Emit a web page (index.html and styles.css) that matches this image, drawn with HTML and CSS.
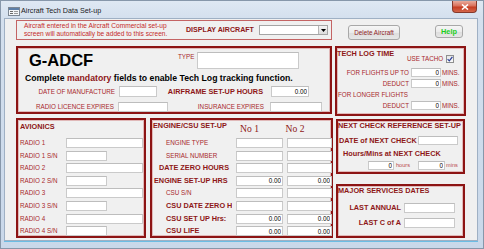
FILE: index.html
```html
<!DOCTYPE html>
<html lang="en">
<head>
    <meta charset="UTF-8">
    <title>Aircraft Tech Data Set-up</title>
    <link rel="stylesheet" href="styles.css">
</head>
<body>
<div class="window">
    <div class="titlebar">
        <svg class="app-icon" width="12" height="9" viewBox="0 0 12 9">
            <rect x="0.5" y="0.5" width="11" height="8" fill="#f4f6f8" stroke="#7d8793"/>
            <rect x="1" y="1" width="10" height="2" fill="#5d7fa8"/>
            <rect x="2" y="4" width="3" height="1" fill="#6a6a6a"/>
            <rect x="6" y="4" width="4" height="1" fill="#9a9a9a"/>
            <rect x="2" y="6" width="3" height="1" fill="#6a6a6a"/>
            <rect x="6" y="6" width="4" height="1" fill="#9a9a9a"/>
        </svg>
        <span class="title">Aircraft Tech Data Set-up</span>
        <div class="close-btn">
            <svg width="8" height="6" viewBox="0 0 8 6"><path d="M1 0.5 L7 5.5 M7 0.5 L1 5.5" stroke="#fff" stroke-width="1.6"/></svg>
        </div>
    </div>

    <div class="client">
        <div class="top-row">
            <div class="note">
                <div class="note-text">Aircraft entered in the Aircraft Commercial set-up<br>screen will automatically be added to this screen.</div>
                <div class="display-label">DISPLAY AIRCRAFT</div>
                <div class="combo">
                    <span class="combo-btn"><svg width="5" height="3" viewBox="0 0 5 3"><path d="M0 0 H5 L2.5 3 Z" fill="#000"/></svg></span>
                </div>
            </div>
            <button class="btn btn-delete">Delete Aircraft</button>
            <button class="btn btn-help">Help</button>
        </div>

        <div class="main">
            <div class="col-left">
                <div class="panel ident">
                    <div class="ident-top">
                        <div class="reg">G-ADCF</div>
                        <label class="lbl type-lbl">TYPE</label>
                        <input class="fld type-fld" type="text">
                    </div>
                    <div class="mandatory">Complete <span class="dark">mandatory</span> fields to enable Tech Log tracking function.</div>
                    <div class="ident-row row-c">
                        <label class="lbl l-dom">DATE OF MANUFACTURE</label>
                        <input class="fld f-dom" type="text">
                        <label class="blbl l-afh">AIRFRAME SET-UP HOURS</label>
                        <input class="fld f-afh" type="text" value="0.00">
                    </div>
                    <div class="ident-row row-d">
                        <label class="lbl l-rle">RADIO LICENCE EXPIRES</label>
                        <input class="fld f-rle" type="text">
                        <label class="lbl l-ins">INSURANCE EXPIRES</label>
                        <input class="fld f-ins" type="text">
                    </div>
                </div>

                <div class="lower">
                    <div class="panel avionics">
                        <div class="blbl panel-title">AVIONICS</div>
                        <div class="av-grid">
                            <label class="lbl">RADIO 1</label><input class="fld long" type="text">
                            <label class="lbl">RADIO 1 S/N</label><input class="fld short" type="text">
                            <label class="lbl">RADIO 2</label><input class="fld long" type="text">
                            <label class="lbl">RADIO 2 S/N</label><input class="fld short" type="text">
                            <label class="lbl">RADIO 3</label><input class="fld long" type="text">
                            <label class="lbl">RADIO 3 S/N</label><input class="fld short" type="text">
                            <label class="lbl">RADIO 4</label><input class="fld long" type="text">
                            <label class="lbl">RADIO 4 S/N</label><input class="fld short" type="text">
                        </div>
                    </div>

                    <div class="panel engine">
                        <div class="eng-head">
                            <div class="blbl eng-title">ENGINE/CSU SET-UP</div>
                            <div class="col-no">No 1</div>
                            <div class="col-no">No 2</div>
                        </div>
                        <div class="eng-grid">
                            <label class="lbl in14">ENGINE TYPE</label><input class="fld" type="text"><input class="fld" type="text">
                            <label class="lbl in14">SERIAL NUMBER</label><input class="fld" type="text"><input class="fld" type="text">
                            <label class="blbl in7">DATE ZERO HOURS</label><input class="fld" type="text"><input class="fld" type="text">
                            <label class="blbl in2">ENGINE SET-UP HRS</label><input class="fld" type="text" value="0.00"><input class="fld" type="text" value="0.00">
                            <label class="lbl in14">CSU S/N</label><input class="fld" type="text"><input class="fld" type="text">
                            <label class="blbl in14">CSU DATE ZERO HOURS</label><input class="fld" type="text"><input class="fld" type="text">
                            <label class="blbl in14">CSU SET UP Hrs:</label><input class="fld" type="text" value="0.00"><input class="fld" type="text" value="0.00">
                            <label class="blbl in14">CSU LIFE</label><input class="fld" type="text" value="0.00"><input class="fld" type="text" value="0.00">
                        </div>
                    </div>
                </div>
            </div>

            <div class="col-right">
                <div class="panel techlog">
                    <div class="tl-head">
                        <div class="blbl tl-title">TECH LOG TIME</div>
                        <label class="lbl tacho-lbl">USE TACHO</label>
                        <span class="check"><svg width="6" height="6" viewBox="0 0 6 6"><path d="M0.6 3.2 L2.3 4.9 L5.4 0.8" stroke="#2a3f9a" stroke-width="1.2" fill="none"/></svg></span>
                    </div>
                    <div class="tl-row r1">
                        <label class="lbl tl-lbl">FOR FLIGHTS UP TO</label>
                        <input class="fld tl-fld" type="text" value="0">
                        <span class="lbl mins">MINS.</span>
                    </div>
                    <div class="tl-row r2">
                        <label class="lbl tl-lbl">DEDUCT</label>
                        <input class="fld tl-fld" type="text" value="0">
                        <span class="lbl mins">MINS.</span>
                    </div>
                    <div class="lbl longer">FOR LONGER FLIGHTS</div>
                    <div class="tl-row r3">
                        <label class="lbl tl-lbl">DEDUCT</label>
                        <input class="fld tl-fld" type="text" value="0">
                        <span class="lbl mins">MINS.</span>
                    </div>
                </div>

                <div class="panel nextcheck">
                    <div class="blbl panel-title">NEXT CHECK REFERENCE SET-UP</div>
                    <div class="nc-row">
                        <label class="blbl nc-lbl">DATE of NEXT CHECK</label>
                        <input class="fld nc-date" type="text">
                    </div>
                    <div class="blbl nc-hours">Hours/Mins at NEXT CHECK</div>
                    <div class="nc-row2">
                        <input class="fld nc-h" type="text" value="0">
                        <span class="unit u-hours">hours</span>
                        <input class="fld nc-m" type="text" value="0">
                        <span class="unit">mins</span>
                    </div>
                </div>

                <div class="panel major">
                    <div class="blbl panel-title">MAJOR SERVICES DATES</div>
                    <div class="mj-row m1">
                        <label class="blbl mj-lbl">LAST ANNUAL</label>
                        <input class="fld mj-fld" type="text">
                    </div>
                    <div class="mj-row m2">
                        <label class="blbl mj-lbl">LAST C of A</label>
                        <input class="fld mj-fld" type="text">
                    </div>
                </div>
            </div>
        </div>
    </div>
</div>
</body>
</html>
```

FILE: styles.css
```css
* {
    box-sizing: border-box;
}

body {
    margin: 0;
    font-family: "Liberation Sans", Arial, sans-serif;
    background: #fff;
}

.window {
    width: 484px;
    height: 249px;
    border: 1px solid #8797aa;
    background: linear-gradient(to bottom, #dfe8f3 0, #d4e0ee 17px, #c9d8ea 100%);
}

/* title bar */
.titlebar {
    display: flex;
    align-items: flex-start;
    height: 17px;
    padding-left: 7px;
}

.app-icon {
    margin-top: 6px;
}

.title {
    margin-left: 1px;
    margin-top: 5px;
    font-size: 7.2px;
    line-height: 10px;
    color: #1b1b1b;
}

.close-btn {
    margin-left: auto;
    margin-right: 6px;
    width: 25px;
    height: 12px;
    display: flex;
    align-items: center;
    justify-content: center;
    border: 1px solid #86392b;
    border-top: none;
    border-radius: 0 0 4px 4px;
    background: linear-gradient(to bottom, #e9ab9c 0, #d9705a 45%, #c63d22 55%, #d3664b 100%);
}

/* client area */
.client {
    margin-left: 3px;
    width: 474px;
    height: 223px;
    padding: 1px 0 0 11px;
    background: #f0f0f0;
    border: 1px solid #9fb0c4;
    box-shadow: 0 1px 0 #6cbde4;
}

.top-row {
    display: flex;
    align-items: flex-start;
    height: 20px;
}

.note {
    display: flex;
    align-items: flex-start;
    width: 316px;
    height: 20px;
    padding-left: 7px;
    border: 1px solid #c46464;
}

.note-text {
    width: 162px;
    margin-top: 1px;
    font-size: 6.6px;
    line-height: 8px;
    color: #c42a2a;
    white-space: nowrap;
}

.display-label {
    width: 73px;
    margin-top: 4px;
    font-size: 7.1px;
    font-weight: bold;
    line-height: 10px;
    color: #8e1818;
}

.combo {
    position: relative;
    width: 69px;
    height: 10px;
    margin-top: 4px;
    background: #fff;
    border: 1px solid #a5a5a5;
}

.combo-btn {
    position: absolute;
    right: 0;
    top: 0;
    width: 9px;
    height: 8px;
    display: flex;
    align-items: center;
    justify-content: center;
    background: linear-gradient(#f4f4f4, #dcdcdc);
    border-left: 1px solid #b5b5b5;
}

.btn {
    margin-top: 5px;
    padding: 0;
    font-family: "Liberation Sans", Arial, sans-serif;
    border: 1px solid #a8a8a8;
    border-radius: 3px;
    background: linear-gradient(to bottom, #f6f6f6 0, #ebebeb 50%, #dddddd 51%, #e6e6e6 100%);
}

.btn-delete {
    margin-left: 16px;
    width: 52px;
    height: 15px;
    font-size: 6.3px;
    color: #8e1c1c;
}

.btn-help {
    margin-left: 35px;
    width: 28px;
    height: 13px;
    font-size: 7.4px;
    font-weight: bold;
    color: #1ccf1c;
}

/* layout */
.main {
    display: flex;
    margin-top: 6px;
}

.col-left {
    width: 317px;
}

.col-right {
    width: 131px;
    margin-left: 2px;
}

.lower {
    display: flex;
    margin-top: 4px;
}

.panel {
    border: 2px solid #8c1414;
    box-shadow: inset 0 0 0 1px rgba(196, 80, 80, 0.35);
}

.ident { width: 316px; height: 68px; }
.avionics { width: 130px; height: 120px; }
.engine { width: 183px; height: 120px; margin-left: 4px; }
.techlog { width: 131px; height: 70px; }
.nextcheck { width: 129px; height: 55px; margin: 3px 1px 0; }
.major { width: 129px; height: 54px; margin: 10px 1px 0; }

/* text */
.lbl {
    font-size: 6.3px;
    line-height: 10px;
    color: #a8292c;
    white-space: nowrap;
}

.blbl {
    font-size: 7.3px;
    font-weight: bold;
    line-height: 10px;
    color: #8e1717;
    white-space: nowrap;
}

.fld {
    display: block;
    height: 10px;
    margin: 0;
    padding: 0 1px;
    font-family: "Liberation Sans", Arial, sans-serif;
    font-size: 6.3px;
    text-align: right;
    color: #000;
    background: #fff;
    border: 1px solid #cacaca;
    border-top-color: #bdbdbd;
    outline: none;
}

/* identity panel */
.ident-top {
    display: flex;
    align-items: flex-start;
    height: 23px;
    padding-left: 11px;
}

.reg {
    width: 149px;
    margin-top: 4px;
    font-size: 16.5px;
    font-weight: bold;
    line-height: 17px;
    color: #000;
}

.type-lbl {
    width: 19px;
    margin-top: 5px;
    line-height: 8px;
}

.type-fld {
    width: 102px;
    height: 17px;
    margin-top: 4px;
}

.mandatory {
    padding-left: 7px;
    font-size: 8.7px;
    font-weight: bold;
    line-height: 14px;
    color: #000;
    white-space: nowrap;
}

.mandatory .dark {
    color: #8e1717;
}

.ident-row {
    display: flex;
    align-items: center;
}

.ident-row label {
    text-align: right;
}

.row-c { margin-top: 1px; height: 11px; }
.row-c .fld { height: 11px; }
.l-dom { width: 97px; margin-right: 4px; }
.f-dom { width: 38px; }
.l-afh { width: 106px; margin-right: 8px; }
.f-afh { width: 38px; }

.row-d { margin-top: 5px; height: 10px; }
.l-rle { width: 96px; margin-right: 4px; }
.f-rle { width: 50px; }
.l-ins { width: 96px; margin-right: 6px; }
.f-ins { width: 52px; }

/* avionics */
.panel-title {
    margin-top: 0;
}

.avionics .panel-title {
    margin-top: 2px;
    padding-left: 2px;
}

.av-grid {
    display: grid;
    grid-template-columns: 46px auto;
    grid-auto-rows: 10px;
    row-gap: 2.6px;
    align-items: center;
    margin-top: 6px;
    padding-left: 2px;
}

.av-grid .long { width: 77px; }
.av-grid .short { width: 41px; }

/* engine */
.eng-head {
    display: flex;
    align-items: flex-start;
    height: 18px;
}

.eng-title {
    width: 92px;
    margin-left: 1px;
    margin-top: 1px;
}

.col-no {
    width: 48px;
    margin-top: 3px;
    font-family: "Liberation Serif", "Times New Roman", serif;
    font-size: 9.6px;
    line-height: 12px;
    color: #8e1717;
}

.eng-grid {
    display: grid;
    grid-template-columns: 80px 47px 45px;
    column-gap: 4px;
    grid-auto-rows: 10px;
    row-gap: 2.6px;
    align-items: center;
}

.eng-grid label {
    overflow: hidden;
}

.eng-grid .fld { width: 100%; }

.in14 { padding-left: 14px; }
.in7 { padding-left: 7px; }
.in2 { padding-left: 2px; }

/* tech log */
.tl-head {
    display: flex;
    align-items: flex-start;
    height: 16px;
}

.tl-title {
    width: 70px;
    margin-top: 1px;
}

.tacho-lbl {
    width: 36px;
    margin-top: 6px;
    margin-right: 3px;
}

.check {
    width: 8px;
    height: 8px;
    margin-top: 7px;
    display: flex;
    align-items: center;
    justify-content: center;
    border: 1px solid #8e8f8f;
    background: linear-gradient(#e6e6e6, #fafafa);
}

.tl-row {
    display: flex;
    align-items: center;
    height: 9px;
}

.tl-row.r1 { margin-top: 4px; }
.tl-row.r2 { margin-top: 2px; }
.tl-row.r3 { margin-top: 1px; }

.tl-lbl {
    width: 72px;
    margin-right: 2px;
    text-align: right;
}

.tl-fld {
    width: 30px;
    height: 9px;
}

.mins {
    margin-left: 1px;
}

.longer {
    margin-top: 2px;
    padding-left: 1px;
}

/* next check */
.nc-row {
    display: flex;
    align-items: center;
    height: 9px;
    margin-top: 5px;
}

.nc-lbl {
    width: 80px;
    padding-left: 1px;
}

.nc-date {
    width: 40px;
    height: 9px;
}

.nc-hours {
    margin-top: 4px;
    padding-left: 5px;
}

.nc-row2 {
    display: flex;
    align-items: center;
    height: 9px;
    margin-top: 2px;
    padding-left: 30px;
}

.nc-h { width: 26px; height: 9px; }
.nc-m { width: 27px; height: 9px; }

.unit {
    margin-left: 1px;
    font-size: 5.6px;
    line-height: 9px;
    color: #b8474a;
}

.u-hours {
    width: 23px;
    margin-left: 1px;
    padding-left: 1px;
}

/* major services */
.mj-row {
    display: flex;
    align-items: center;
    height: 10px;
}

.mj-row.m1 { margin-top: 7px; }
.mj-row.m2 { margin-top: 5px; }

.mj-lbl {
    width: 63px;
    margin-right: 3px;
    text-align: right;
}

.mj-fld { width: 51px; }
```
